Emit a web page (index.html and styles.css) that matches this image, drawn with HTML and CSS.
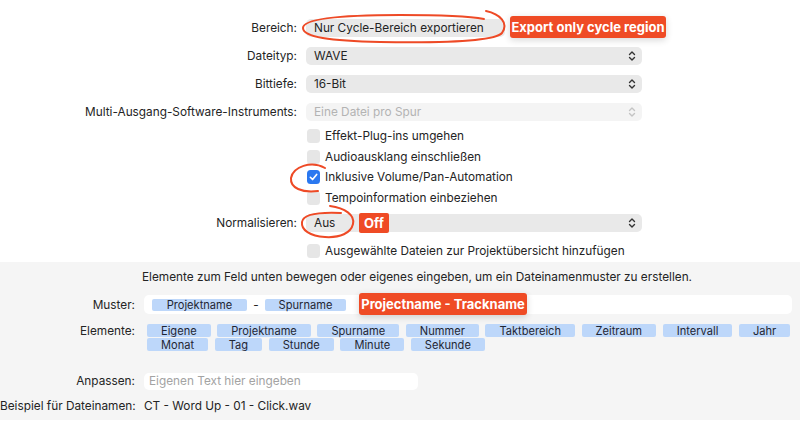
FILE: index.html
```html
<!DOCTYPE html>
<html lang="de">
<head>
<meta charset="utf-8">
<title>Export</title>
<link rel="stylesheet" href="styles.css">
</head>
<body>
<div class="page">
  <section class="top">
    <div class="form">
      <div class="lbl">Bereich:</div>
      <div class="ctl"><div class="popup popup-short">Nur Cycle-Bereich exportieren</div></div>

      <div class="lbl">Dateityp:</div>
      <div class="ctl"><div class="popup"><span>WAVE</span>
        <svg class="chev" viewBox="0 0 8 12" width="8" height="12"><path d="M1.5 4.5 L4 2 L6.5 4.5 M1.5 7.5 L4 10 L6.5 7.5"/></svg></div></div>

      <div class="lbl">Bittiefe:</div>
      <div class="ctl"><div class="popup"><span>16-Bit</span>
        <svg class="chev" viewBox="0 0 8 12" width="8" height="12"><path d="M1.5 4.5 L4 2 L6.5 4.5 M1.5 7.5 L4 10 L6.5 7.5"/></svg></div></div>

      <div class="lbl">Multi-Ausgang-Software-Instruments:</div>
      <div class="ctl"><div class="popup disabled"><span>Eine Datei pro Spur</span>
        <svg class="chev" viewBox="0 0 8 12" width="8" height="12"><path d="M1.5 4.5 L4 2 L6.5 4.5 M1.5 7.5 L4 10 L6.5 7.5"/></svg></div></div>

      <div class="lbl"></div>
      <div class="checks">
        <div class="check"><span class="box"></span>Effekt-Plug-ins umgehen</div>
        <div class="check"><span class="box"></span>Audioausklang einschließen</div>
        <div class="check"><span class="box on"><svg viewBox="0 0 14 14" width="14" height="14"><path d="M3.6 7.3 L6 9.7 L10.4 4.3"/></svg></span>Inklusive Volume/Pan-Automation</div>
        <div class="check"><span class="box"></span>Tempoinformation einbeziehen</div>
      </div>

      <div class="lbl lbl-norm">Normalisieren:</div>
      <div class="ctl ctl-norm"><div class="popup"><span>Aus</span>
        <svg class="chev" viewBox="0 0 8 12" width="8" height="12"><path d="M1.5 4.5 L4 2 L6.5 4.5 M1.5 7.5 L4 10 L6.5 7.5"/></svg></div></div>

      <div class="lbl"></div>
      <div class="checks">
        <div class="check"><span class="box"></span>Ausgewählte Dateien zur Projektübersicht hinzufügen</div>
      </div>
    </div>
  </section>

  <section class="bottom">
    <p class="desc">Elemente zum Feld unten bewegen oder eigenes eingeben, um ein Dateinamenmuster zu erstellen.</p>
    <div class="grid">
      <div class="blbl muster-lbl">Muster:</div>
      <div class="field pattern">
        <span class="tok tok-in">Projektname</span>
        <span class="dash">-</span>
        <span class="tok tok-in tok-spur">Spurname</span>
      </div>

      <div class="blbl elem-lbl">Elemente:</div>
      <div class="elements">
        <div class="erow">
          <span class="tok">Eigene</span>
          <span class="tok">Projektname</span>
          <span class="tok">Spurname</span>
          <span class="tok">Nummer</span>
          <span class="tok">Taktbereich</span>
          <span class="tok">Zeitraum</span>
          <span class="tok">Intervall</span>
          <span class="tok">Jahr</span>
        </div>
        <div class="erow">
          <span class="tok">Monat</span>
          <span class="tok">Tag</span>
          <span class="tok">Stunde</span>
          <span class="tok">Minute</span>
          <span class="tok">Sekunde</span>
        </div>
      </div>

      <div class="blbl anp-lbl">Anpassen:</div>
      <div class="field custom">Eigenen Text hier eingeben</div>

      <div class="blbl bsp-lbl">Beispiel für Dateinamen:</div>
      <div class="bsp">CT - Word Up - 01 - Click.wav</div>
    </div>
  </section>

  <svg class="marks" viewBox="0 0 800 433" width="800" height="433">
    <path d="M486 11 C500 14 509 23 502 33 C494 42 440 43 380 42 C330 41 303 37 303 28 C303 20 330 15 400 15 C440 15 468 16 484 19"/>
    <path d="M325 168 C311 160 293 167 291 178 C290 188 302 193 318 191"/>
    <path d="M330 206 C345 208 355 215 353 224 C351 233 340 238 325 237 C310 236 301 230 302 222 C303 214 318 212 341 213"/>
  </svg>
  <div class="tag tag-export">Export only cycle region</div>
  <div class="tag tag-off">Off</div>
  <div class="tag tag-pattern">Projectname - Trackname</div>
</div>
</body>
</html>
```

FILE: styles.css
```css
* { box-sizing: border-box; }
html, body { margin: 0; padding: 0; background: #ffffff; }
body {
  font-family: Inter, "Liberation Sans", Arial, sans-serif;
  font-size: 11.8px;
  color: #242424;
  width: 800px;
  height: 433px;
  overflow: hidden;
}
.page { position: relative; width: 800px; height: 433px; }

/* ---------- top form ---------- */
.top { padding-top: 14px; height: 262px; }
.form {
  display: grid;
  grid-template-columns: 297px 336px;
  column-gap: 9px;
  align-items: center;
}
.lbl { text-align: right; height: 28px; line-height: 28px; white-space: nowrap; }
.ctl { height: 28px; display: flex; align-items: center; }
.lbl-norm, .ctl-norm { margin-top: 1px; }
.popup {
  width: 336px;
  height: 18px;
  border-radius: 5px;
  background: #e9e9e9;
  display: flex;
  align-items: center;
  justify-content: space-between;
  padding: 0 6px 0 8px;
  white-space: nowrap;
}
.popup-short { width: 199px; }
.popup.disabled { background: #f4f4f4; color: #b3b3b3; }
.chev { display: block; fill: none; stroke: #333333; stroke-width: 1.4; stroke-linecap: round; stroke-linejoin: round; }
.disabled .chev { stroke: #c4c4c4; }

.checks { display: flex; flex-direction: column; }
.check {
  height: 20.5px;
  display: flex;
  align-items: center;
  white-space: nowrap;
}
.box {
  width: 13px;
  height: 14px;
  border-radius: 3.5px;
  background: #e6e6e6;
  margin: 0 5px 0 1px;
  flex: none;
  display: flex;
  align-items: center;
  justify-content: center;
}
.box.on { background: #2a78f0; }
.box.on svg { display: block; fill: none; stroke: #ffffff; stroke-width: 1.8; stroke-linecap: round; stroke-linejoin: round; }

/* ---------- bottom ---------- */
.bottom {
  background: #f5f5f5;
  height: 158px;
  padding: 7px 8px 0 0;
}
.desc {
  margin: 0 0 0 42px;
  text-align: center;
  line-height: 16px;
  height: 16px;
  white-space: nowrap;
}
.grid {
  display: grid;
  grid-template-columns: 135px 1fr;
  column-gap: 9px;
  margin-top: 10px;
}
.blbl { text-align: right; white-space: nowrap; line-height: 16px; }
.muster-lbl { align-self: center; }
.field {
  background: #ffffff;
  border-radius: 5px;
}
.pattern {
  height: 19px;
  display: flex;
  align-items: center;
  padding-left: 8px;
}
.tok {
  display: inline-flex;
  align-items: center;
  justify-content: center;
  background: #bdd7fa;
  color: #1f2633;
  font-size: 11.1px;
  height: 13px;
  padding: 0 14px;
  border-radius: 2px;
  white-space: nowrap;
}
.tok-in { height: 12px; width: 95px; }
.tok-spur { width: 81px; }
.dash { width: 18px; text-align: center; }

.elem-lbl { margin-top: 10px; line-height: 14px; }
.elements { margin-top: 10px; padding-left: 3px; display: flex; flex-direction: column; gap: 1px; }
.erow { display: flex; gap: 6.6px; }

.anp-lbl { margin-top: 22px; line-height: 17px; }
.custom {
  margin-top: 22px;
  width: 274px;
  height: 17px;
  line-height: 17px;
  padding-left: 5px;
  color: #a3a3a3;
}
.bsp-lbl, .bsp { margin-top: 8px; line-height: 16px; white-space: nowrap; }

/* ---------- annotations ---------- */
.marks {
  position: absolute;
  left: 0; top: 0;
  pointer-events: none;
  fill: none;
  stroke: #ee4a26;
  stroke-width: 2;
  stroke-linecap: round;
}
.tag {
  position: absolute;
  background: #ef4b25;
  color: #ffffff;
  font-weight: 700;
  font-size: 13px;
  border-radius: 3px;
  display: flex;
  align-items: center;
  justify-content: center;
  white-space: nowrap;
  box-shadow: 0 2px 7px rgba(0, 0, 0, 0.16);
}
.tag-export { left: 510px; top: 16px; width: 156px; height: 22px; }
.tag-off { left: 359px; top: 213px; width: 30px; height: 20px; border-radius: 2px; box-shadow: none; }
.tag-pattern { left: 359px; top: 293px; width: 168px; height: 22px; }
```
